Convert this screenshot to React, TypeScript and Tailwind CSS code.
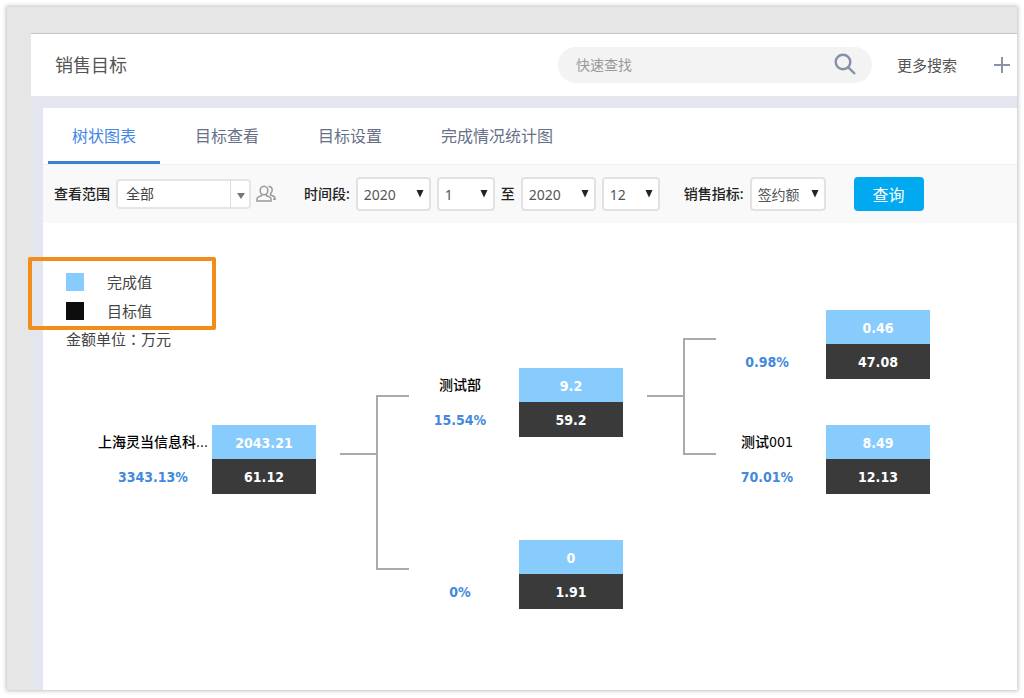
import React, { useState } from "react";

type TreeItem = {
  name: string;
  rate: string;
  done: string;
  target: string;
  children?: TreeItem[];
};

const tree: TreeItem = {
  name: "上海灵当信息科...",
  rate: "3343.13%",
  done: "2043.21",
  target: "61.12",
  children: [
    {
      name: "测试部",
      rate: "15.54%",
      done: "9.2",
      target: "59.2",
      children: [
        { name: "", rate: "0.98%", done: "0.46", target: "47.08" },
        { name: "测试001", rate: "70.01%", done: "8.49", target: "12.13" },
      ],
    },
    { name: "", rate: "0%", done: "0", target: "1.91" },
  ],
};

const tabs = ["树状图表", "目标查看", "目标设置", "完成情况统计图"];

const legend = [
  { label: "完成值", swatch: "bg-[#88ccfe]" },
  { label: "目标值", swatch: "bg-[#0d0d0d]" },
];

const numberFont = "font-['DejaVu_Sans_Condensed','DejaVu_Sans','Noto_Sans_CJK_SC',sans-serif]";

function PickList({ label, value, options, className }: { label: string; value: string; options: string[]; className: string }) {
  const [current, setCurrent] = useState(value);
  return (
    <div className={`relative shrink-0 ${className}`}>
      <select
        aria-label={label}
        value={current}
        onChange={(e) => setCurrent(e.target.value)}
        className="w-full h-[34px] appearance-none rounded border-2 border-[#e2e2e2] bg-white pl-1.5 pt-0.5 text-sm text-[#555] outline-none"
      >
        {options.map((o) => (
          <option key={o}>{o}</option>
        ))}
      </select>
      <svg viewBox="0 0 8 8" className="pointer-events-none absolute right-[7px] top-[13px] w-2 h-2 fill-[#222]">
        <path d="M0.500 0h7L4 7.500z" />
      </svg>
    </div>
  );
}

function TreeNode({ item }: { item: TreeItem }) {
  const children = item.children || [];
  return (
    <div className="flex items-center">
      <div className={`flex py-[23px] text-sm ${numberFont}`}>
        <div className="w-[102px] mr-2 flex flex-col items-center whitespace-nowrap">
          <span className="h-[34px] leading-[35px] font-medium text-black">{item.name}</span>
          <span className="h-[35px] leading-[36px] font-bold text-[#4389dc]">{item.rate}</span>
        </div>
        <div className="w-[104px] text-center font-bold text-white">
          <div className="h-[34px] leading-[36px] bg-[#88ccfe]">{item.done}</div>
          <div className="h-[35px] leading-[36px] bg-[#3a3a3a]">{item.target}</div>
        </div>
      </div>

      {children.length > 0 && (
        <>
          <div className="w-9 h-0.5 ml-6 mb-3 bg-[#aaa]" />
          <div>
            {children.map((child, i) => (
              <div key={i} className="flex">
                {/* Branch line: upper half joins the previous sibling, lower half the next */}
                <div className="w-[33px] flex flex-col">
                  <div className={`h-[calc(50%-5px)] border-b-2 border-[#aaa] ${i > 0 ? "border-l-2" : ""}`} />
                  <div className={`flex-1 border-[#aaa] ${i < children.length - 1 ? "border-l-2" : ""}`} />
                </div>
                <TreeNode item={child} />
              </div>
            ))}
          </div>
        </>
      )}
    </div>
  );
}

export default function App() {
  const [activeTab, setActiveTab] = useState(tabs[0]);
  const [keyword, setKeyword] = useState("");

  return (
    <div className="min-h-screen flex bg-white pt-[7px] pb-2 px-[7px] font-['Noto_Sans','Noto_Sans_CJK_SC',sans-serif]">
      <div className="flex-1 min-w-0 flex flex-col bg-[#e6e6e6] pl-6 pt-[26px] shadow-[0_0_4px_1px_rgba(0,0,0,0.25)]">
        {/* Header */}
        <header className="h-[63px] flex items-center justify-between border-t border-[#c4c4c4] bg-white pl-6 pr-1.5">
          <h1 className="text-lg text-[#555]">销售目标</h1>
          <div className="flex items-center">
            <form className="w-[314px] h-9 flex items-center rounded-full bg-[#f3f3f3] pl-[18px] pr-4" onSubmit={(e) => e.preventDefault()}>
              <input
                aria-label="快速查找"
                value={keyword}
                onChange={(e) => setKeyword(e.target.value)}
                placeholder="快速查找"
                className="flex-1 min-w-0 bg-transparent text-sm text-[#555] outline-none placeholder:text-[#999]"
              />
              <button type="submit" aria-label="搜索" className="pb-0.5">
                <svg viewBox="0 0 22 22" className="w-[22px] h-[22px] fill-none stroke-[#8690a6] stroke-[2.4]">
                  <circle cx="9" cy="9" r="7.3" />
                  <path d="M14.300 14.300L21 21" />
                </svg>
              </button>
            </form>
            <a href="#" className="ml-[25px] text-[15px] text-[#555]">更多搜索</a>
            <button aria-label="新增" className="ml-9">
              <svg viewBox="0 0 18 18" className="w-[18px] h-[18px] fill-none stroke-[#8a93a8] stroke-2">
                <path d="M9 1v16M1 9h16" />
              </svg>
            </button>
          </div>
        </header>

        <div className="flex-1 flex flex-col bg-[#e3e6ef] pl-3 pt-3">
          <main className="flex-1 bg-white">
            {/* Tabs */}
            <nav className="flex gap-[11px] pl-[5px] border-b border-[#f0f0f0]">
              {tabs.map((tab) => (
                <button
                  key={tab}
                  onClick={() => setActiveTab(tab)}
                  className={`h-14 px-6 pt-[3px] text-base border-b-3 ${activeTab === tab ? "border-[#3f7fd0] text-[#4486e6]" : "border-transparent text-[#667088]"}`}
                >
                  {tab}
                </button>
              ))}
            </nav>

            {/* Filters */}
            <form className="h-[58px] flex items-center bg-[#f9f9f9] pl-[11px] text-sm text-[#222]" onSubmit={(e) => e.preventDefault()}>
              <label htmlFor="scope" className="font-medium">查看范围</label>
              <div className="relative ml-1.5 w-[135px]">
                <select id="scope" className="w-full h-[30px] appearance-none rounded border-2 border-[#e5e5e5] bg-white pl-2 text-sm text-[#444] outline-none">
                  <option>全部</option>
                </select>
                <span className="pointer-events-none absolute right-0 inset-y-0 w-[21px] flex items-center justify-center border-l border-[#ddd]">
                  <svg viewBox="0 0 8 6" className="w-2 h-1.5 mt-1 fill-[#777]">
                    <path d="M0 0h8L4 6z" />
                  </svg>
                </span>
              </div>
              <button type="button" aria-label="选择人员" className="ml-[5px]">
                <svg viewBox="0 0 20 18" className="w-5 h-[18px] fill-none stroke-[#999] stroke-[1.5]">
                  <ellipse cx="8" cy="5.500" rx="3.800" ry="4.300" />
                  <path d="M5.500 9.300v1.500l-3.300 1.300c-.8.400-1.200 1-1.200 1.800v2.100h14v-2.100c0-.8-.4-1.400-1.200-1.800l-3.300-1.300V9.300" />
                  <path d="M12.500 1.500c2.300-.3 3.700 1.300 3.700 3.500 0 1.600-.6 2.800-1.600 3.600v1.300l3 1.300c.9.400 1.400 1 1.400 1.800v1.300h-2" />
                </svg>
              </button>

              <span className="ml-7 font-medium">时间段:</span>
              <PickList label="开始年份" value="2020" options={["2019", "2020", "2021"]} className="ml-1.5 w-[75px]" />
              <PickList label="开始月份" value="1" options={["1", "6", "12"]} className="ml-1.5 w-[58px]" />
              <span className="mx-1.5 font-medium">至</span>
              <PickList label="结束年份" value="2020" options={["2019", "2020", "2021"]} className="w-[75px]" />
              <PickList label="结束月份" value="12" options={["1", "6", "12"]} className="ml-1.5 w-[58px]" />

              <span className="ml-6 font-medium">销售指标:</span>
              <PickList label="销售指标" value="签约额" options={["签约额", "回款额"]} className="ml-1.5 w-[76px]" />
              <button type="submit" className="ml-7 w-[70px] h-[34px] rounded bg-[#00a9f0] pt-0.5 text-base text-white">查询</button>
            </form>

            {/* Legend and tree share one grid cell */}
            <div className="grid items-start justify-start">
              <div className="col-start-1 row-start-1 ml-[23px] mt-11 text-[15px] leading-7 text-[#444] font-['Noto_Sans_CJK_TC',sans-serif]">
                <div className="relative">
                  {legend.map((item) => (
                    <div key={item.label} className="flex items-center h-[29px]">
                      <span className={`w-[18px] h-[18px] mr-[23px] ${item.swatch}`} />
                      {item.label}
                    </div>
                  ))}
                  <div className="pointer-events-none absolute -left-[38px] -top-2.5 w-[188px] h-[73px] border-4 border-[#f28c1a] rounded-xs" />
                </div>
                <p>金额单位：万元</p>
              </div>
              <div className="col-start-1 row-start-1 ml-[59px] mt-16">
                <TreeNode item={tree} />
              </div>
            </div>
          </main>
        </div>
      </div>
    </div>
  );
}
